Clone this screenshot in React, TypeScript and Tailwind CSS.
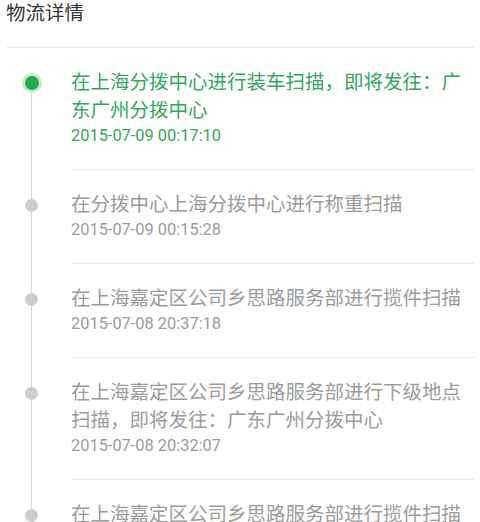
type Trace = {
  desc: string;
  time: string;
};

const traces: Trace[] = [
  { desc: "在上海分拨中心进行装车扫描，即将发往：广东广州分拨中心", time: "2015-07-09 00:17:10" },
  { desc: "在分拨中心上海分拨中心进行称重扫描", time: "2015-07-09 00:15:28" },
  { desc: "在上海嘉定区公司乡思路服务部进行揽件扫描", time: "2015-07-08 20:37:18" },
  { desc: "在上海嘉定区公司乡思路服务部进行下级地点扫描，即将发往：广东广州分拨中心", time: "2015-07-08 20:32:07" },
  { desc: "在上海嘉定区公司乡思路服务部进行揽件扫描", time: "2015-07-08 20:05:31" },
];

// one row of the timeline: rail + dot on the left, text on the right
const TraceItem = ({ item, first }: { item: Trace; first: boolean }) => {
  const color = first ? "text-[#32a85a]" : "text-[#9b9b9b]";
  return (
    <div className="flex">
      <div className="w-[63px] shrink-0 flex flex-col items-center">
        {first ? (
          <>
            <div className="h-[25px] w-px"></div>
            <div className="w-[20px] h-[20px] rounded-full bg-[#2bb24c]/25 flex items-center justify-center">
              <div className="w-[14px] h-[14px] rounded-full bg-[#22ad4a]"></div>
            </div>
          </>
        ) : (
          <>
            <div className="h-[29px] w-px bg-[#d4d4d4]"></div>
            <div className="w-[13px] h-[13px] rounded-full bg-[#cdcdcd]"></div>
          </>
        )}
        <div className="flex-1 w-px bg-[#d4d4d4]"></div>
      </div>
      <div className="flex-1 ml-[8px] mr-[5px] pt-[21px] pb-[22px] border-b border-[#ededed]">
        <div className={`text-[19.5px] leading-[28px] ${color}`}>{item.desc}</div>
        <div className={`text-[16.4px] leading-[22px] ${color}`}>{item.time}</div>
      </div>
    </div>
  );
};

const App = () => {
  return (
    <div className="w-[480px] h-[522px] overflow-hidden bg-white font-['Roboto','Noto_Sans_CJK_SC',sans-serif]">
      <div className="h-[48px] ml-[6px] mr-[5px] border-b border-[#ededed]">
        <div className="text-[19.5px] leading-[28px] text-[#333]">物流详情</div>
      </div>
      <div className="flex flex-col">
        {traces.map((t, i) => (
          <TraceItem key={i} item={t} first={i === 0} />
        ))}
      </div>
    </div>
  );
};

export default App;
